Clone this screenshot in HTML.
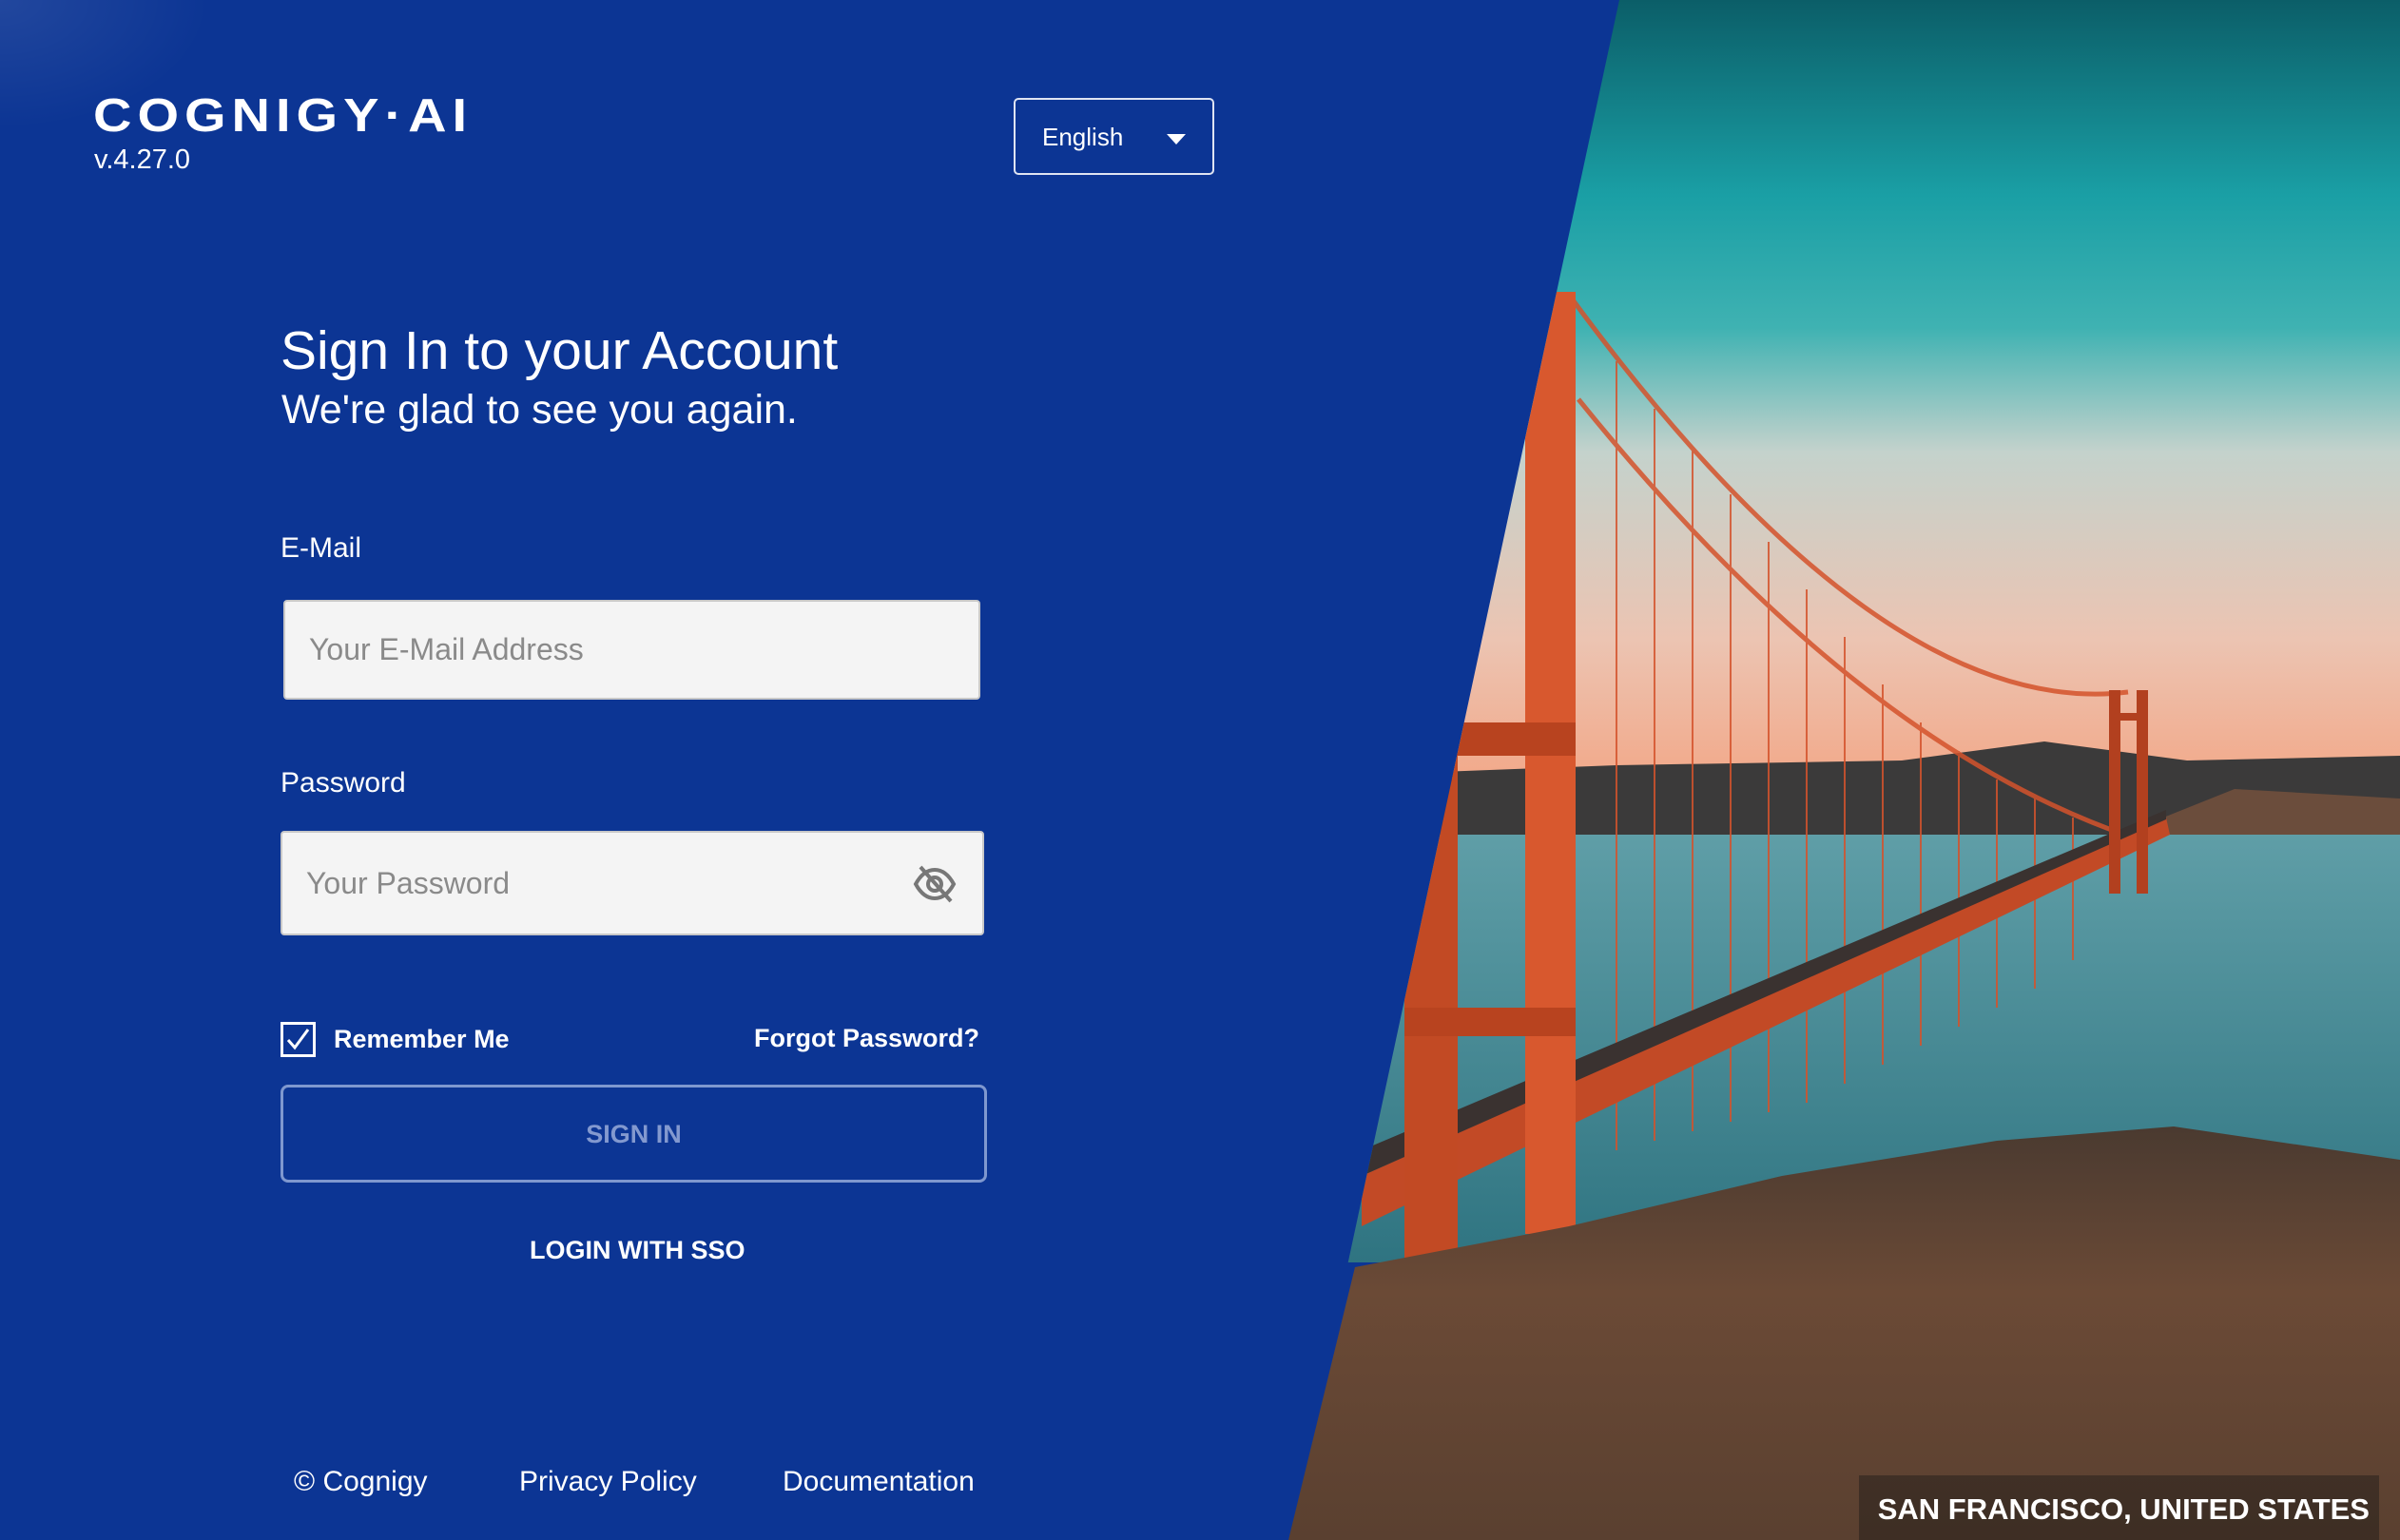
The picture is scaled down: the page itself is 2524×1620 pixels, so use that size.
<!DOCTYPE html>
<html><head><meta charset="utf-8"><style>
*{margin:0;padding:0;box-sizing:border-box}
html,body{width:2524px;height:1620px;overflow:hidden}
body{background:#0c3594;font-family:"Liberation Sans",sans-serif;color:#fff;position:relative}
.glare{position:absolute;left:0;top:0;width:260px;height:160px;background:radial-gradient(ellipse at 0 0,rgba(255,255,255,.09),rgba(255,255,255,0) 60%)}
.a{position:absolute;white-space:nowrap}
.logo{left:98px;top:92px;font-size:56px;font-weight:bold;letter-spacing:6px;transform:scaleY(.88);transform-origin:left top}
.ver{left:99px;top:152px;font-size:29px}
.lang{left:1066px;top:103px;width:211px;height:81px;border:2px solid #dfe4f2;border-radius:5px}
.lang span{position:absolute;left:28px;top:24px;font-size:26px}
.lang i{position:absolute;right:28px;top:36px;border-left:10px solid transparent;border-right:10px solid transparent;border-top:11px solid #fff}
.h1{left:295px;top:336px;font-size:57px}
.h2{left:296px;top:407px;font-size:43px}
.lbl{font-size:30px;left:295px}
.inp{position:absolute;background:#f4f4f4;border:2px solid #c8c8c8;border-radius:4px}
.ph{position:absolute;left:25px;top:32px;font-size:32px;color:#8a8a8a}
.btn{left:295px;top:1141px;width:743px;height:103px;border:3px solid #7f98cf;border-radius:8px}
.btn span{position:absolute;width:100%;text-align:center;top:34px;font-size:27px;font-weight:bold;color:#8399cf}
.foot{top:1542px;font-size:30px}
</style></head><body>
<div class="glare"></div>
<div class="a logo">COGNIGY·AI</div>
<div class="a ver">v.4.27.0</div>
<div class="a lang"><span>English</span><i></i></div>
<div class="a h1">Sign In to your Account</div>
<div class="a h2">We're glad to see you again.</div>
<div class="a lbl" style="top:560px">E-Mail</div>
<div class="inp" style="left:298px;top:631px;width:733px;height:105px"><span class="ph">Your E-Mail Address</span></div>
<div class="a lbl" style="top:807px">Password</div>
<div class="inp" style="left:295px;top:874px;width:740px;height:110px"><span class="ph" style="top:35px">Your Password</span>
<svg style="position:absolute;left:663px;top:34px" width="46" height="40" viewBox="0 0 46 40" fill="none" stroke="#777" stroke-width="4"><path d="M3 20C9 9 16 5 23 5s14 4 20 15c-6 11-13 15-20 15S9 31 3 20z"/><circle cx="23" cy="20" r="7"/><path d="M8 2l32 36"/></svg></div>
<div class="a" style="left:295px;top:1075px;width:37px;height:37px;border:3px solid #fff"><svg width="31" height="31" viewBox="0 0 31 31"><path d="M5 16l7 8L26 5" fill="none" stroke="#fff" stroke-width="3"/></svg></div>
<div class="a" style="left:351px;top:1078px;font-size:27px;font-weight:bold">Remember Me</div>
<div class="a" style="right:1494px;top:1077px;font-size:27px;font-weight:bold">Forgot Password?</div>
<div class="a btn"><span>SIGN IN</span></div>
<div class="a" style="left:557px;top:1300px;font-size:27px;font-weight:bold">LOGIN WITH SSO</div>
<div class="a foot" style="left:309px">© Cognigy</div>
<div class="a foot" style="left:546px">Privacy Policy</div>
<div class="a foot" style="left:823px">Documentation</div>
<svg class="a" style="left:0;top:0" width="2524" height="1620">
<defs>
<clipPath id="c"><polygon points="1703,0 2524,0 2524,1620 1355,1620"/></clipPath>
<linearGradient id="sky" x1="0" y1="0" x2="0" y2="1"><stop offset="0" stop-color="#0b5e68"/><stop offset=".25" stop-color="#1a9fa5"/><stop offset=".42" stop-color="#3fb2b2"/><stop offset=".58" stop-color="#c4d2cc"/><stop offset=".82" stop-color="#ecc4b2"/><stop offset="1" stop-color="#f2a98a"/></linearGradient>
<linearGradient id="wat" x1="0" y1="0" x2="0" y2="1"><stop offset="0" stop-color="#5f9ea7"/><stop offset="1" stop-color="#2f7481"/></linearGradient>
<linearGradient id="hill" x1="0" y1="0" x2="0" y2="1"><stop offset="0" stop-color="#4a3a30"/><stop offset=".4" stop-color="#6b4a36"/><stop offset="1" stop-color="#5a4030"/></linearGradient>
</defs>
<g clip-path="url(#c)">
<rect x="1300" y="0" width="1224" height="820" fill="url(#sky)"/>
<path d="M1300 820 L1700 805 L2000 800 L2150 780 L2300 800 L2524 795 L2524 880 L1300 880Z" fill="#3b3a3a"/>
<path d="M2250 870 L2350 830 L2524 840 L2524 890 L2250 890Z" fill="#6b4d3c"/>
<rect x="1300" y="878" width="1224" height="450" fill="url(#wat)"/>
<g stroke="#d4532c" stroke-width="2" opacity=".85">
<path d="M1660 420 Q1950 780 2240 880" fill="none" stroke-width="5"/>
<path d="M1650 310 Q1980 760 2238 728" fill="none" stroke-width="5"/>
<path d="M1700 380V1210M1740 430V1200M1780 470V1190M1820 520V1180M1860 570V1170M1900 620V1160M1940 670V1140M1980 720V1120M2020 760V1100M2060 790V1080M2100 820V1060M2140 840V1040M2180 860V1010"/>
</g>
<path d="M1432 1237 L2278 860 L2282 878 L1432 1290Z" fill="#c24a26"/>
<path d="M1432 1210 L2278 852 L2278 862 L1432 1237Z" fill="#3a3230"/>
<rect x="2218" y="726" width="12" height="214" fill="#b2401f"/><rect x="2247" y="726" width="12" height="214" fill="#b2401f"/><rect x="2218" y="750" width="41" height="8" fill="#b2401f"/>
<rect x="1604" y="307" width="53" height="991" fill="#d8582e"/>
<rect x="1477" y="661" width="56" height="672" fill="#c24a24"/>
<rect x="1477" y="760" width="180" height="35" fill="#b8431f"/><rect x="1477" y="1060" width="180" height="30" fill="#b8431f"/>
<path d="M1355 1620 L1425 1333 L1650 1290 L1874 1237 L2100 1200 L2286 1185 L2524 1220 L2524 1620Z" fill="url(#hill)"/>
<rect x="1955" y="1552" width="547" height="68" fill="rgba(20,20,20,.4)"/>
</g>
<text x="2492" y="1598" text-anchor="end" font-family="Liberation Sans" font-weight="bold" font-size="31" fill="#fff">SAN FRANCISCO, UNITED STATES</text>
</svg>
</body></html>
